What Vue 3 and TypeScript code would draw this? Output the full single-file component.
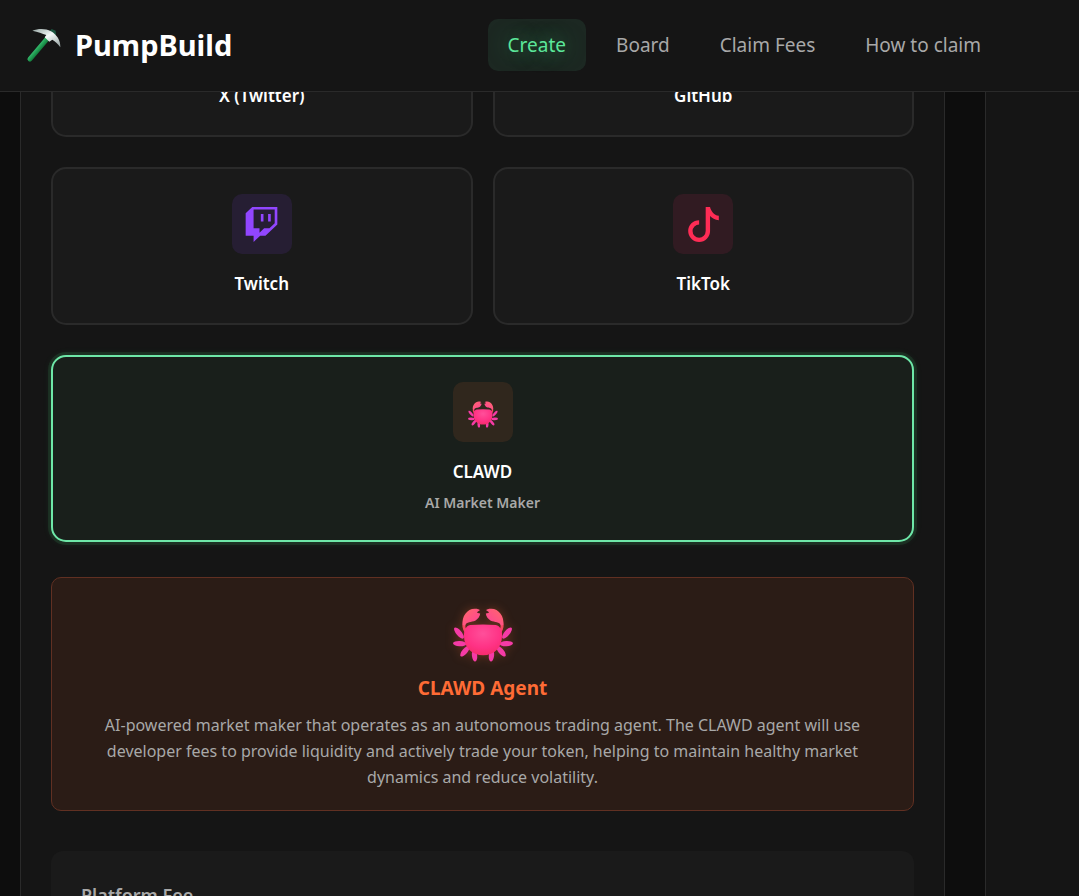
<script setup lang="ts">
import { ref } from 'vue'

interface NavItem { label: string; href: string }
interface Platform { id: string; label: string; viewBox: string; path: string }

const navItems: NavItem[] = [
  { label: 'Create', href: '#create' },
  { label: 'Board', href: '#board' },
  { label: 'Claim Fees', href: '#claim-fees' },
  { label: 'How to claim', href: '#how-to-claim' },
]

const platforms: Platform[] = [
  {
    id: 'x',
    label: 'X (Twitter)',
    viewBox: '0 0 512 512',
    path: 'M389.2 48h70.6L305.6 224.2 487 464H345L233.7 318.6 106.5 464H35.8l164.9-188.5L26.8 48h145.6l100.5 132.9zm-24.8 373.8h39.1L151.1 88h-42z',
  },
  {
    id: 'github',
    label: 'GitHub',
    viewBox: '0 0 24 24',
    path: 'M12 .5a12 12 0 0 0-3.8 23.4c.6.1.8-.3.8-.6v-2.2c-3.3.7-4-1.4-4-1.4-.6-1.4-1.4-1.8-1.4-1.8-1-.7.1-.7.1-.7 1.2.1 1.9 1.2 1.9 1.2 1 1.8 2.8 1.3 3.5 1 .1-.8.4-1.3.8-1.6-2.7-.3-5.5-1.3-5.5-5.9 0-1.3.5-2.4 1.2-3.2-.1-.3-.5-1.5.1-3.2 0 0 1-.3 3.3 1.2a11.5 11.5 0 0 1 6 0c2.3-1.5 3.3-1.2 3.3-1.2.7 1.7.3 2.9.1 3.2.8.8 1.2 1.9 1.2 3.2 0 4.6-2.8 5.6-5.5 5.9.4.4.8 1.1.8 2.2v3.3c0 .3.2.7.8.6A12 12 0 0 0 12 .5z',
  },
  {
    id: 'twitch',
    label: 'Twitch',
    viewBox: '0 0 512 512',
    path: 'M391.17,103.47H352.54v109.7h38.63ZM285,103H246.37V212.75H285ZM120.83,0,24.31,91.42V420.58H140.14V512l96.53-91.42h77.25L487.69,256V0ZM449.07,237.75l-77.22,73.12H294.61l-67.6,64v-64H140.14V36.58H449.07Z',
  },
  {
    id: 'tiktok',
    label: 'TikTok',
    viewBox: '0 0 16 16',
    path: 'M9 0h1.98c.144.715.54 1.617 1.235 2.512C12.895 3.389 13.797 4 15 4v2c-1.753 0-3.07-.814-4-1.829V11a5 5 0 1 1-5-5v2a3 3 0 1 0 3 3z',
  },
]

const activeNav = ref('Create')
const selected = ref('clawd')
</script>

<template>
  <div class="app">
    <svg class="defs" aria-hidden="true">
      <defs>
        <radialGradient id="shell" cx="50%" cy="30%" r="75%">
          <stop offset="0" stop-color="#ff4f9a" />
          <stop offset="0.6" stop-color="#ff3285" />
          <stop offset="1" stop-color="#f52a68" />
        </radialGradient>
        <linearGradient id="claw" x1="0" y1="0" x2="1" y2="1">
          <stop offset="0" stop-color="#ff6a68" />
          <stop offset="1" stop-color="#ff3e9c" />
        </linearGradient>
        <g id="crab-half">
          <g fill="#f53ba6">
            <ellipse cx="144" cy="129" rx="21" ry="8" transform="rotate(50 144 129)" />
            <ellipse cx="146" cy="161" rx="20" ry="8" transform="rotate(3 146 161)" />
            <ellipse cx="162" cy="184" rx="20" ry="8" transform="rotate(-50 162 184)" />
            <ellipse cx="191" cy="197" rx="8" ry="18" transform="rotate(-6 191 197)" />
          </g>
          <path d="M160 98q-4 14 5 27" fill="none" stroke="#f5475f" stroke-width="9" stroke-linecap="round" />
          <path d="M155 104c-3-25 14-49 38-48 7 0 12 2 14 4l-9 6 3 3 7 1c-1 9-7 17-15 22-12 5-26 2-31 15z" fill="url(#claw)" />
        </g>
        <g id="crab">
          <use href="#crab-half" />
          <use href="#crab-half" transform="translate(433 0) scale(-1 1)" />
          <path d="M178 105q38-4 77 0c14 3 20 16 19 33-1 35-23 58-57 58s-57-23-58-58c0-17 5-30 19-33z" fill="url(#shell)" />
        </g>
      </defs>
    </svg>

    <header class="header">
      <a class="brand" href="#home">
        <svg class="pickaxe" viewBox="75 80 111 111" aria-hidden="true">
          <defs>
            <linearGradient id="handle" gradientUnits="userSpaceOnUse" x1="106" y1="138" x2="120" y2="150">
              <stop offset="0" stop-color="#3fce7c" />
              <stop offset="1" stop-color="#14833f" />
            </linearGradient>
            <linearGradient id="steel" x1="0" y1="0" x2="0.8" y2="1">
              <stop offset="0" stop-color="#93a3a0" />
              <stop offset="0.5" stop-color="#f4f9f8" />
              <stop offset="1" stop-color="#9eaaa9" />
            </linearGradient>
          </defs>
          <path d="M90 176L146 110" fill="none" stroke="url(#handle)" stroke-width="15" stroke-linecap="round" />
          <path d="M147 94l8-8 12 5 1 12-9 6z" fill="#1c5540" />
          <path d="M97 91c18-7 40-7 56 2 17 10 29 27 28 48-7-10-15-17-24-23l-9 6-14-13 5-7c-12-5-25-9-42-13z" fill="url(#steel)" />
        </svg>
        <span>PumpBuild</span>
      </a>
      <nav class="nav" aria-label="Main">
        <a
          v-for="item in navItems"
          :key="item.label"
          :href="item.href"
          class="nav-link"
          :class="{ active: activeNav === item.label }"
          @click="activeNav = item.label"
        >{{ item.label }}</a>
      </nav>
    </header>

    <main class="main">
      <section class="panel">
        <div class="platforms">
          <button
            v-for="p in platforms"
            :key="p.id"
            type="button"
            class="card"
            :class="{ selected: selected === p.id }"
            @click="selected = p.id"
          >
            <span class="tile" :class="p.id">
              <svg class="glyph" :viewBox="p.viewBox" aria-hidden="true"><path :d="p.path" /></svg>
            </span>
            <span class="card-label">{{ p.label }}</span>
          </button>
          <button
            type="button"
            class="card wide"
            :class="{ selected: selected === 'clawd' }"
            @click="selected = 'clawd'"
          >
            <span class="tile clawd">
              <svg class="crab-small" viewBox="126 54 181 162" aria-hidden="true"><use href="#crab" /></svg>
            </span>
            <span class="card-label">CLAWD</span>
            <span class="card-sub">AI Market Maker</span>
          </button>
        </div>

        <section class="agent">
          <div class="agent-icon">
            <svg class="crab-large" viewBox="126 54 181 162" aria-hidden="true"><use href="#crab" /></svg>
          </div>
          <h2 class="agent-title">CLAWD Agent</h2>
          <p class="agent-text">
            AI-powered market maker that operates as an autonomous trading agent. The CLAWD agent will use
            developer fees to provide liquidity and actively trade your token, helping to maintain healthy market
            dynamics and reduce volatility.
          </p>
        </section>

        <section class="fee">
          <h3 class="fee-title">Platform Fee</h3>
        </section>
      </section>
      <aside class="side"></aside>
    </main>
  </div>
</template>

<style>
body {
  background: #0d0d0d;
}
</style>

<style scoped>
.app {
  display: flex;
  flex-direction: column;
  height: 100vh;
  overflow: hidden;
  background: #0d0d0d;
  color: #fff;
  font-family: "Segoe UI", "Noto Sans", "Open Sans", sans-serif;
}

.app * {
  box-sizing: border-box;
}

.defs {
  position: absolute;
  width: 0;
  height: 0;
}

.header {
  display: flex;
  flex: none;
  align-items: center;
  justify-content: space-between;
  padding: 19px 78px 20px 25px;
  border-bottom: 1px solid #2a2a2a;
  background: #151515;
}

.brand {
  display: flex;
  align-items: center;
  gap: 13px;
  color: #fff;
  font-size: 29px;
  font-weight: 700;
  line-height: 38px;
  text-decoration: none;
}

.pickaxe {
  width: 37px;
  height: 37px;
}

.nav {
  display: flex;
  gap: 10px;
}

.nav-link {
  padding: 10px 20px;
  border-radius: 10px;
  color: #a8a8a8;
  font-size: 19px;
  line-height: 32px;
  text-decoration: none;
  white-space: nowrap;
}

.nav-link.active {
  background: #1c2822;
  color: #5be79a;
  text-shadow: 0 0 20px rgba(74, 222, 128, 0.5);
}

.main {
  display: grid;
  flex: 1;
  grid-template-columns: minmax(0, 1fr) 94px;
  gap: 40px;
  min-height: 0;
  padding-left: 20px;
  overflow: hidden;
}

.panel {
  min-width: 0;
  padding: 0 30px;
  border: solid #2a2a2a;
  border-width: 0 1px;
  background: #151515;
}

.side {
  border-left: 1px solid #2a2a2a;
  background: #151515;
}

.platforms {
  display: grid;
  grid-template-columns: 1fr 1fr;
  gap: 30px 20px;
  margin-top: -113px;
}

.card {
  display: flex;
  flex-direction: column;
  align-items: center;
  padding: 25px;
  border: 2px solid #2a2a2a;
  border-radius: 15px;
  background: #1a1a1a;
  color: #fff;
  font-family: inherit;
  font-weight: 600;
  cursor: pointer;
}

.card.wide {
  grid-column: 1 / -1;
}

.card.selected {
  border-color: #6ee7a8;
  background: #191f1b;
  box-shadow: 0 0 0 3px rgba(74, 222, 128, 0.1), 0 0 8px rgba(74, 222, 128, 0.12);
}

.tile {
  display: flex;
  align-items: center;
  justify-content: center;
  width: 60px;
  height: 60px;
  margin-bottom: 15px;
  border-radius: 10px;
}

.tile.x,
.tile.github {
  background: #313131;
  color: #fff;
}

.tile.twitch {
  background: #261e33;
  color: #9146ff;
}

.tile.tiktok {
  background: #311b22;
  color: #fe2c55;
}

.tile.clawd {
  background: #30271d;
}

.glyph {
  height: 35px;
  fill: currentColor;
}

.card-label {
  font-size: 17px;
  line-height: 29px;
}

.card-sub {
  margin-top: 5px;
  color: #a8a8a8;
  font-size: 14px;
  line-height: 24px;
}

.crab-small {
  width: 30px;
  height: 27px;
  margin-top: 5px;
}

.agent {
  margin-top: 35px;
  padding: 20px;
  border: 1px solid #613022;
  border-radius: 10px;
  background: #2b1c16;
  text-align: center;
}

.agent-icon {
  display: flex;
  align-items: center;
  justify-content: center;
  height: 74px;
}

.crab-large {
  width: 60px;
  height: 54px;
  filter: drop-shadow(0 0 5px rgba(255, 107, 53, 0.3));
}

.agent-title {
  margin: 0 0 8px;
  color: #ff6b35;
  font-size: 19px;
  font-weight: 700;
  line-height: 32px;
}

.agent-text {
  margin: 0;
  padding: 0 10px;
  color: #a8a8a8;
  font-size: 16px;
  line-height: 26px;
}

.fee {
  margin-top: 40px;
  padding: 30px;
  border-radius: 12px;
  background: #1a1a1a;
}

.fee-title {
  margin: 0;
  color: #a8a8a8;
  font-size: 18px;
  font-weight: 600;
  line-height: 29px;
}
</style>
